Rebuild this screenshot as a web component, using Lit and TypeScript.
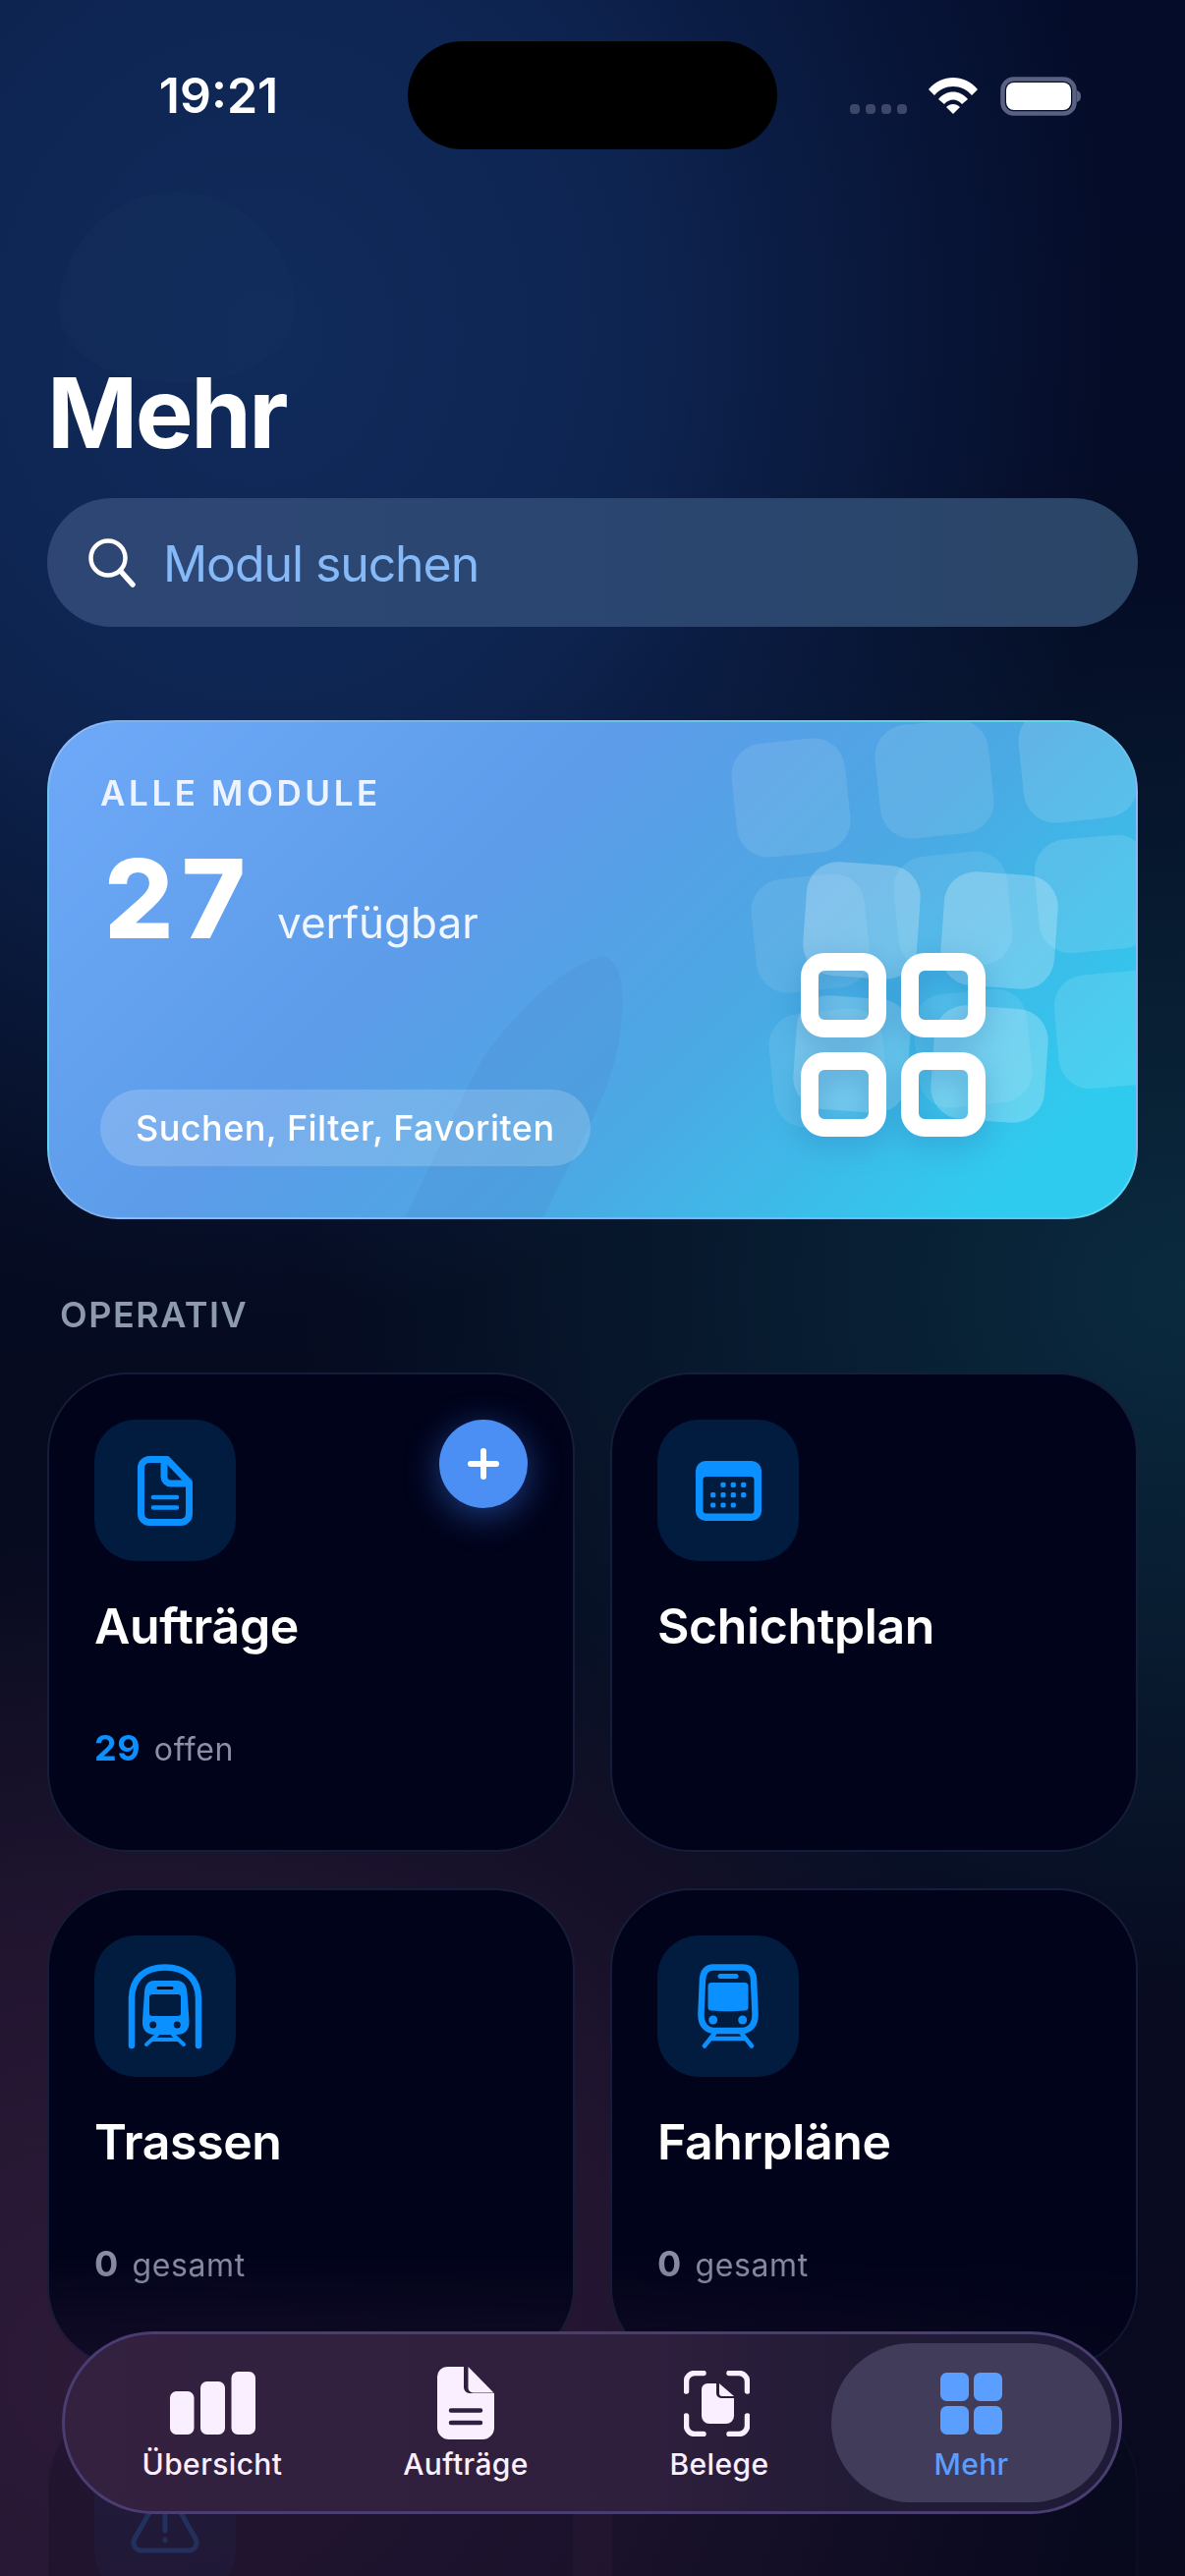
import { LitElement, html, css, svg } from "lit";
import { customElement } from "lit/decorators.js";

const tiles = [
  { x: 805, y: 812, s: 116, r: -6, a: 0.1 },
  { x: 951, y: 793, s: 116, r: -6, a: 0.1 },
  { x: 1097, y: 777, s: 116, r: -6, a: 0.13 },
  { x: 1113, y: 910, s: 116, r: -5, a: 0.12 },
  { x: 1133, y: 1048, s: 116, r: -5, a: 0.12 },
  { x: 825, y: 950, s: 116, r: -6, a: 0.09 },
  { x: 970, y: 927, s: 116, r: -6, a: 0.09 },
  { x: 877, y: 937, s: 116, r: 4, a: 0.24 },
  { x: 1017, y: 947, s: 116, r: 4, a: 0.24 },
  { x: 843, y: 1087, s: 116, r: -6, a: 0.09 },
  { x: 867, y: 1073, s: 116, r: 4, a: 0.2 },
  { x: 990, y: 1067, s: 116, r: -6, a: 0.09 },
  { x: 1007, y: 1083, s: 116, r: 4, a: 0.24 },
];

const docIcon = html`<svg width="56" height="71" viewBox="0 0 56 71" fill="none" stroke="#0a91ff" stroke-width="7" stroke-linejoin="round" stroke-linecap="round">
  <path d="M12 3.5H30L52.5 27V59A8.5 8.5 0 0 1 44 67.5H12A8.5 8.5 0 0 1 3.5 59V12A8.5 8.5 0 0 1 12 3.5Z"/>
  <path d="M27 4V21A7 7 0 0 0 34 28H52"/>
  <path stroke-width="4.5" d="M16 42H40M16 52.5H40"/>
</svg>`;

const calDots = [
  [28, 24.3], [38.3, 24.3], [48.7, 24.3],
  [17.7, 34.7], [28, 34.7], [38.3, 34.7], [48.7, 34.7],
  [17.7, 45], [28, 45], [38.3, 45],
];
const calIcon = html`<svg width="67" height="61" viewBox="0 0 67 61">
  <path fill="#0a91ff" fill-rule="evenodd" d="M10 0H57A10 10 0 0 1 67 10V51A10 10 0 0 1 57 61H10A10 10 0 0 1 0 51V10A10 10 0 0 1 10 0ZM10 16A3 3 0 0 0 7.500 19V50A3 3 0 0 0 10 53.500H56A3 3 0 0 0 59.500 50V19A3 3 0 0 0 56 16Z"/>
  ${calDots.map(([x, y]) => svg`<rect x=${x - 2.6} y=${y - 2.6} width="5.2" height="5.2" rx="1.6" fill="#0a91ff"/>`)}
</svg>`;

const tunnelIcon = html`<svg width="76" height="87" viewBox="0 0 76 87" fill="none">
  <path d="M4 83V36C4 14 18 3.500 38 3.500S72 14 72 36V83" stroke="#0a91ff" stroke-width="6.500" stroke-linecap="round"/>
  <path fill="#0a91ff" fill-rule="evenodd" d="M27 17H50C57 17 60 22 60.500 29L62.500 58C63 67 58 72 50 72H27C19 72 14.500 67 15 58L17 29C17.500 22 20 17 27 17ZM25 31A3 3 0 0 0 22 34V50A3 3 0 0 0 25 53H51A3 3 0 0 0 54 50V34A3 3 0 0 0 51 31ZM25.700 58.500A3.500 3.500 0 1 0 25.700 65.500A3.500 3.500 0 1 0 25.700 58.500ZM50.300 58.500A3.500 3.500 0 1 0 50.300 65.500A3.500 3.500 0 1 0 50.300 58.500Z"/>
  <path d="M31 24.500H45" stroke="#02102c" stroke-width="3" stroke-linecap="round"/>
  <path d="M30 72L19 82M46 72L57 82M26 77H50" stroke="#0a91ff" stroke-width="4" stroke-linecap="round"/>
</svg>`;

const trainIcon = html`<svg width="62" height="86" viewBox="0 0 62 86" fill="none">
  <path d="M16 3.500H46C54 3.500 56.500 9 57 16L58.500 50C59 62 53 68 44 68H18C9 68 3 62 3.500 50L5 16C5.500 9 8 3.500 16 3.500Z" stroke="#0a91ff" stroke-width="6.500"/>
  <path fill="#0a91ff" d="M14 19H48A3.500 3.500 0 0 1 51.500 22.500V44A3.500 3.500 0 0 1 48 47.500C36 48.500 26 48.500 14 47.500A3.500 3.500 0 0 1 10.500 44V22.500A3.500 3.500 0 0 1 14 19Z"/>
  <rect x="20.500" y="10" width="21" height="5" rx="2.500" fill="#0a91ff"/>
  <circle cx="15.700" cy="57" r="4.500" fill="#0a91ff"/>
  <circle cx="45.700" cy="57" r="4.500" fill="#0a91ff"/>
  <path d="M17 71L7 83.500M45 71L55 83.500M14 76H48" stroke="#0a91ff" stroke-width="4.500" stroke-linecap="round"/>
</svg>`;

const warnIcon = html`<svg width="70" height="66" viewBox="0 0 70 66" fill="none" stroke="#0a91ff" stroke-width="5" stroke-linejoin="round" stroke-linecap="round">
  <path d="M28 8C31 3 39 3 42 8L66 50C69 56 65 62 59 62H11C5 62 1 56 4 50Z"/>
  <path d="M35 22V42M35 51V51.500"/>
</svg>`;

const barsIcon = html`<svg width="87" height="64" viewBox="0 0 87 64" fill="#f9efff">
  <rect x="0" y="20" width="24.500" height="44" rx="6.500"/>
  <rect x="31" y="10" width="25" height="54" rx="6.500"/>
  <rect x="62.500" y="0" width="24.500" height="64" rx="6.500"/>
</svg>`;

const docFill = html`<svg width="58" height="74" viewBox="0 0 58 74">
  <path fill="#f9efff" d="M10 0H27V21A6 6 0 0 0 33 27H58V62A12 12 0 0 1 46 74H12A12 12 0 0 1 0 62V10A10 10 0 0 1 10 0Z"/>
  <path fill="#f9efff" d="M31.500 0L57.500 26.500H36.500A5 5 0 0 1 31.500 21.500Z"/>
  <path d="M14 44.500H44M14 57H44" stroke="#2e2040" stroke-width="4.500" stroke-linecap="round"/>
</svg>`;

const scanIcon = html`<svg width="67" height="67" viewBox="0 0 67 67" fill="none">
  <path d="M20 2.500H11A8.500 8.500 0 0 0 2.500 11V21M46 2.500H56A8.500 8.500 0 0 1 64.500 11V21M20 64.500H11A8.500 8.500 0 0 1 2.500 56V46M46 64.500H56A8.500 8.500 0 0 0 64.500 56V46" stroke="#f9efff" stroke-width="5.500" stroke-linecap="round"/>
  <path fill="#f9efff" d="M24 13H33V23A5 5 0 0 0 38 28H51V46A8 8 0 0 1 43 54H26A8 8 0 0 1 18 46V19A6 6 0 0 1 24 13Z"/>
  <path fill="#f9efff" d="M36 13L51 26H39A3 3 0 0 1 36 23Z"/>
</svg>`;

const gridIcon = html`<svg width="63" height="63" viewBox="0 0 63 63" fill="#5a9eff">
  <rect x="0" y="0" width="29" height="29" rx="6.500"/>
  <rect x="34" y="0" width="29" height="29" rx="6.500"/>
  <rect x="0" y="34" width="29" height="29" rx="6.500"/>
  <rect x="34" y="34" width="29" height="29" rx="6.500"/>
</svg>`;

@customElement("app-root")
export class AppRoot extends LitElement {
  static styles = css`
    :host {
      display: block;
      position: relative;
      width: 1206px;
      height: 2622px;
      overflow: hidden;
      font-family: Inter, "Liberation Sans", sans-serif;
      color: #fff;
      background:
        radial-gradient(ellipse 880px 1000px at 22% 13%, #102a5a 0%, rgba(16, 42, 90, 0.85) 40%, rgba(16, 42, 90, 0) 100%),
        radial-gradient(ellipse 900px 750px at 100% 50%, #0a2a3e 0%, rgba(10, 42, 62, 0) 100%),
        radial-gradient(ellipse 1000px 850px at 12% 92%, #2d1a38 0%, rgba(45, 26, 56, 0.7) 50%, rgba(45, 26, 56, 0) 100%),
        linear-gradient(#040c2a, #050b20 45%, #0a0a1f);
    }
    .spot {
      position: absolute;
      left: 60px;
      top: 195px;
      width: 240px;
      height: 195px;
      border-radius: 50% 50% 48% 48% / 62% 62% 38% 38%;
      background: rgba(120, 170, 200, 0.025);
    }
    .page {
      position: relative;
      padding: 0 48px;
      height: 2622px;
      box-sizing: border-box;
      -webkit-mask-image: linear-gradient(#000 2290px, rgba(0, 0, 0, 0.6) 2400px, rgba(0, 0, 0, 0.2) 2440px, rgba(0, 0, 0, 0.2));
      mask-image: linear-gradient(#000 2290px, rgba(0, 0, 0, 0.6) 2400px, rgba(0, 0, 0, 0.2) 2440px, rgba(0, 0, 0, 0.2));
    }
    .status {
      display: flex;
      align-items: center;
      padding-top: 42px;
      height: 110px;
    }
    .time-slot {
      width: 367px;
      display: flex;
      justify-content: center;
      padding-right: 18px;
      box-sizing: border-box;
    }
    .time {
      font-size: 50px;
      font-weight: 600;
      line-height: 56px;
    }
    .island {
      width: 376px;
      height: 110px;
      border-radius: 55px;
      background: #000;
      flex: none;
    }
    .status-right {
      display: flex;
      align-items: flex-start;
      margin-left: 74px;
      height: 40px;
      margin-top: 2px;
    }
    .dots {
      display: flex;
      gap: 6px;
      margin-top: 28px;
    }
    .dots span {
      width: 10px;
      height: 10px;
      border-radius: 4px;
      background: #3f4768;
    }
    .wifi {
      margin-left: 22px;
      margin-top: 1px;
    }
    .battery {
      margin-left: 23px;
    }
    h1 {
      margin: 208px 0 0 0;
      font-size: 99px;
      line-height: 120px;
      font-weight: 700;
      letter-spacing: -2.500px;
    }
    .search {
      margin-top: 27px;
      height: 131px;
      border-radius: 66px;
      display: flex;
      align-items: center;
      padding-left: 41px;
      gap: 27px;
      background: linear-gradient(90deg, #2f4675, #2a4670 55%, #2a4566);
    }
    .search span {
      font-size: 50px;
      padding-top: 2px;
      color: #86b9f7;
      letter-spacing: -1.100px;
    }
    .hero {
      position: relative;
      margin-top: 95px;
      height: 508px;
      box-sizing: border-box;
      border-radius: 72px;
      overflow: hidden;
      border: 2px solid rgba(255, 255, 255, 0.22);
      padding: 52px 52px 0;
      background: linear-gradient(135deg, #6ea9f8 0%, #5c9ce9 38%, #4ba9e3 62%, #2fcbee 90%);
    }
    .tile {
      position: absolute;
      border-radius: 32px;
    }
    .fin {
      position: absolute;
      left: 0;
      top: 0;
    }
    .hero-label {
      position: relative;
      font-size: 35px;
      line-height: 40px;
      font-weight: 600;
      letter-spacing: 3.600px;
      color: #eef4ff;
    }
    .hero-count {
      position: relative;
      display: flex;
      align-items: baseline;
      margin-top: 23px;
      margin-left: 4px;
      line-height: 130px;
    }
    .hero-count b {
      font-size: 111px;
      font-weight: 800;
      letter-spacing: 8px;
    }
    .hero-count span {
      font-size: 44px;
      margin-left: 24px;
      color: #f2f6ff;
    }
    .chip {
      position: absolute;
      left: 52px;
      top: 374px;
      height: 78px;
      padding: 0 36px;
      display: flex;
      align-items: center;
      border-radius: 39px;
      background: rgba(255, 255, 255, 0.18);
      font-size: 36px;
      font-weight: 500;
      letter-spacing: 0.450px;
      color: #fff;
    }
    .hero-icon {
      position: absolute;
      left: 765px;
      top: 235px;
      filter: drop-shadow(0 8px 14px rgba(40, 100, 170, 0.35));
    }
    .section {
      margin: 75px 0 37px 13px;
      height: 44px;
      line-height: 44px;
      font-size: 36px;
      font-weight: 600;
      letter-spacing: 1.500px;
      color: #8d99ad;
    }
    .grid {
      display: grid;
      grid-template-columns: 537px 537px;
      grid-auto-rows: 488px;
      gap: 37px 36px;
    }
    .card {
      position: relative;
      box-sizing: border-box;
      border-radius: 82px;
      background: #01031a;
      border: 2px solid #161d3a;
      padding: 46px 46px 0;
    }
    .tile-icon {
      width: 144px;
      height: 144px;
      border-radius: 42px;
      background: #021c3f;
      display: flex;
      align-items: center;
      justify-content: center;
    }
    .name {
      margin-top: 36px;
      font-size: 50px;
      line-height: 60px;
      font-weight: 600;
      letter-spacing: -0.400px;
    }
    .meta {
      margin-top: 73px;
      font-size: 32px;
      line-height: 42px;
      color: #8b90a5;
      letter-spacing: 0.600px;
    }
    .meta b {
      font-weight: 700;
      margin-right: 4px;
      font-size: 36px;
    }
    .meta b.hot {
      color: #0a91ff;
    }
    .plus {
      position: absolute;
      top: 46px;
      right: 46px;
      width: 90px;
      height: 90px;
      border-radius: 50%;
      background: #4b8ff5;
      box-shadow: 0 8px 36px rgba(60, 130, 255, 0.45);
      display: flex;
      align-items: center;
      justify-content: center;
    }
    .tabs {
      position: absolute;
      left: 63px;
      top: 2373px;
      width: 1079px;
      height: 186px;
      box-sizing: border-box;
      border-radius: 93px;
      border: 3px solid #4a3d72;
      background: linear-gradient(90deg, #33213f 0%, #2e1f3d 55%, #221b36 75%, #1e1b36 100%);
      display: grid;
      grid-template-columns: repeat(4, 258px);
      padding: 9px 0 9px 21px;
    }
    .tab {
      display: flex;
      flex-direction: column;
      align-items: center;
      color: #f9efff;
      font-size: 30px;
      font-weight: 500;
      letter-spacing: 0.400px;
      border-radius: 81px;
      height: 162px;
    }
    .tab .ico {
      height: 80px;
      margin-top: 21px;
      display: flex;
      align-items: center;
      justify-content: center;
    }
    .tab .ico.scan {
      padding-right: 5px;
    }
    .tab .lbl {
      line-height: 36px;
      margin-top: 4px;
    }
    .tab.on {
      background: #413c5a;
      color: #5a9eff;
      margin: 0 -12px 0 -15px;
    }
  `;

  render() {
    return html`
      <div class="spot"></div>
      <div class="page">
        <div class="status">
          <div class="time-slot"><div class="time">19:21</div></div>
          <div class="island"></div>
          <div class="status-right">
            <div class="dots"><span></span><span></span><span></span><span></span></div>
            <svg class="wifi" width="50" height="37" viewBox="0 0 50 37" fill="#fff">
              <path d="M0 12C13 -4 37 -4 50 12L44 18C34 6 16 6 6 18Z"/>
              <path d="M10 22C18 12 32 12 40 22L34 27C29 21 21 21 16 27Z"/>
              <path d="M18 30C22 26 28 26 32 30L25 37Z"/>
            </svg>
            <svg class="battery" width="82" height="40" viewBox="0 0 82 40">
              <rect x="2.500" y="2.500" width="73" height="35" rx="11" fill="none" stroke="#5a6080" stroke-width="4.500"/>
              <rect x="6" y="6" width="66" height="28" rx="8" fill="#fff"/>
              <path d="M78 14C81 15 82 17 82 20S81 25 78 26Z" fill="#5a6080"/>
            </svg>
          </div>
        </div>

        <h1>Mehr</h1>

        <div class="search">
          <svg width="50" height="50" viewBox="0 0 50 50" fill="none" stroke="#fff" stroke-linecap="round">
            <circle cx="21" cy="20" r="17.500" stroke-width="4.500"/>
            <path d="M33.500 33L46 47" stroke-width="5.500"/>
          </svg>
          <span>Modul suchen</span>
        </div>

        <div class="hero">
          <svg class="fin" width="1110" height="508" viewBox="0 0 1110 508">
            <path d="M560 239C578 236 586 262 583 300C578 380 530 440 502 508H360C395 440 420 380 440 345C470 300 520 250 560 239Z" fill="rgba(70,110,190,0.12)"/>
          </svg>
          ${tiles.map(
            (t) => html`<div
              class="tile"
              style="left:${t.x - 48 - t.s / 2 - 2}px;top:${t.y - 733 - t.s / 2 - 2}px;width:${t.s}px;height:${t.s}px;transform:rotate(${t.r}deg);background:rgba(255,255,255,${t.a})"
            ></div>`
          )}
          <div class="hero-label">ALLE MODULE</div>
          <div class="hero-count"><b>27</b><span>verfügbar</span></div>
          <div class="chip">Suchen, Filter, Favoriten</div>
          <svg class="hero-icon" width="188" height="187" viewBox="0 0 188 187" fill="none" stroke="#fff" stroke-width="18">
            <rect x="9" y="9" width="69" height="68" rx="15"/>
            <rect x="111" y="9" width="68" height="68" rx="15"/>
            <rect x="9" y="110" width="69" height="68" rx="15"/>
            <rect x="111" y="110" width="68" height="68" rx="15"/>
          </svg>
        </div>

        <div class="section">OPERATIV</div>

        <div class="grid">
          <div class="card">
            <div class="tile-icon">${docIcon}</div>
            <div class="plus">
              <svg width="32" height="32" viewBox="0 0 32 32" stroke="#fff" stroke-width="6" stroke-linecap="round"><path d="M16 3V29M3 16H29"/></svg>
            </div>
            <div class="name">Aufträge</div>
            <div class="meta"><b class="hot">29</b> offen</div>
          </div>
          <div class="card">
            <div class="tile-icon">${calIcon}</div>
            <div class="name">Schichtplan</div>
          </div>
          <div class="card">
            <div class="tile-icon">${tunnelIcon}</div>
            <div class="name">Trassen</div>
            <div class="meta"><b>0</b> gesamt</div>
          </div>
          <div class="card">
            <div class="tile-icon">${trainIcon}</div>
            <div class="name">Fahrpläne</div>
            <div class="meta"><b>0</b> gesamt</div>
          </div>
          <div class="card">
            <div class="tile-icon">${warnIcon}</div>
          </div>
          <div class="card"></div>
        </div>
      </div>

      <div class="tabs">
        <div class="tab"><div class="ico">${barsIcon}</div><div class="lbl">Übersicht</div></div>
        <div class="tab"><div class="ico">${docFill}</div><div class="lbl">Aufträge</div></div>
        <div class="tab"><div class="ico scan">${scanIcon}</div><div class="lbl">Belege</div></div>
        <div class="tab on"><div class="ico">${gridIcon}</div><div class="lbl">Mehr</div></div>
      </div>
    `;
  }
}
